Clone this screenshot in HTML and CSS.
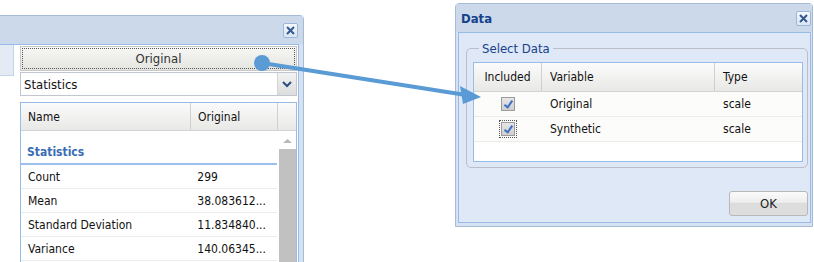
FILE: index.html
```html
<!DOCTYPE html>
<html lang="en">
<head>
    <meta charset="UTF-8">
    <title>Statistics and Data</title>
    <link rel="stylesheet" href="styles.css">
</head>
<body>
    <div class="canvas">

        <!-- Statistics window (cut off on the left) -->
        <div class="win win-stats">
            <div class="win-head">
                <span class="win-title"></span>
                <span class="win-close">
                    <svg viewBox="0 0 15 15" width="15" height="15"><path d="M4,4 L11,11 M11,4 L4,11" stroke="#34598f" stroke-width="2" fill="none"/></svg>
                </span>
            </div>
            <div class="win-body stats-body">
                <div class="side-box"></div>
                <div class="main-col">
                    <div class="btn-toggle"><span>Original</span></div>
                    <div class="combo">
                        <span class="combo-text">Statistics</span>
                        <span class="combo-trigger">
                            <svg viewBox="0 0 18 22" width="18" height="22"><path d="M5,9 L9,13 L13,9" stroke="#2c4d82" stroke-width="2" fill="none"/></svg>
                        </span>
                    </div>
                    <div class="grid stats-grid">
                        <div class="grid-head">
                            <div class="hcell col-name">Name</div>
                            <div class="hcell col-val">Original</div>
                            <div class="hcell col-sb"></div>
                        </div>
                        <div class="grid-main">
                            <div class="grid-rows">
                                <div class="group-row">Statistics</div>
                                <div class="row"><span class="col-name">Count</span><span class="col-val">299</span></div>
                                <div class="row"><span class="col-name">Mean</span><span class="col-val">38.083612...</span></div>
                                <div class="row"><span class="col-name">Standard Deviation</span><span class="col-val">11.834840...</span></div>
                                <div class="row"><span class="col-name">Variance</span><span class="col-val">140.06345...</span></div>
                            </div>
                            <div class="scrollbar">
                                <div class="sb-up">
                                    <svg viewBox="0 0 17 18" width="17" height="18"><polygon points="4,12 13,12 8.5,8" fill="#b9b9b9"/></svg>
                                </div>
                                <div class="sb-thumb"></div>
                            </div>
                        </div>
                    </div>
                </div>
            </div>
        </div>

        <!-- Data dialog -->
        <div class="win win-data">
            <div class="win-head">
                <span class="win-title">Data</span>
                <span class="win-close">
                    <svg viewBox="0 0 15 15" width="15" height="15"><path d="M4,4 L11,11 M11,4 L4,11" stroke="#34598f" stroke-width="2" fill="none"/></svg>
                </span>
            </div>
            <div class="win-body data-body">
                <fieldset class="select-set">
                    <legend>Select Data</legend>
                    <div class="grid data-grid">
                        <div class="grid-head">
                            <div class="hcell col-inc">Included</div>
                            <div class="hcell col-var">Variable</div>
                            <div class="hcell col-type">Type</div>
                        </div>
                        <div class="row">
                            <span class="col-inc"><span class="check"></span></span>
                            <span class="col-var">Original</span>
                            <span class="col-type">scale</span>
                        </div>
                        <div class="row">
                            <span class="col-inc"><span class="check focused"></span></span>
                            <span class="col-var">Synthetic</span>
                            <span class="col-type">scale</span>
                        </div>
                    </div>
                </fieldset>
                <div class="btn-row">
                    <div class="btn-ok">OK</div>
                </div>
            </div>
        </div>

        <!-- Connector arrow -->
        <svg class="connector" viewBox="0 0 814 262" width="814" height="262">
            <line x1="262" y1="63" x2="466" y2="95" stroke="#5b9bd5" stroke-width="4"/>
            <circle cx="262" cy="63" r="8" fill="#5b9bd5"/>
            <polygon points="481,97 460,86 463,104" fill="#5b9bd5"/>
        </svg>
    </div>
</body>
</html>
```

FILE: styles.css
```css
/* Page */
body {
    margin: 0;
    background: #ffffff;
    font-family: 'DejaVu Sans Condensed', 'DejaVu Sans', sans-serif;
    font-size: 12px;
    color: #111111;
}

.canvas {
    position: relative;
    width: 814px;
    height: 262px;
    overflow: hidden;
}

/* Windows */
.win {
    position: absolute;
    box-sizing: border-box;
    border: 1px solid #a6bcd6;
    border-radius: 4px 4px 0 0;
    background: #d6e2f0;
    display: flex;
    flex-direction: column;
}

.win-stats {
    left: -20px;
    top: 15px;
    width: 324px;
    height: 270px;
}

.win-data {
    left: 455px;
    top: 3px;
    width: 358px;
    height: 224px;
}

.win-head {
    height: 28px;
    flex: none;
    display: flex;
    align-items: center;
    justify-content: space-between;
    padding: 0 1px 0 5px;
    background: #cbd9ea;
}

.win-stats .win-head {
    padding-right: 5px;
}

.win-title {
    font-weight: bold;
    color: #15428b;
    font-size: 13px;
}

.win-close {
    width: 15px;
    height: 15px;
    box-sizing: border-box;
    border: 1px solid #9bb7dc;
    border-radius: 2px;
    background: linear-gradient(#f4f8fd, #dbe6f4);
    display: flex;
    margin-top: 1px;
}

.win-close svg {
    margin: -1px;
}

.win-body {
    flex: 1;
    border: 1px solid #99bbe8;
}

/* Statistics window body */
.stats-body {
    margin: 0 4px 0 3px;
    background: #ffffff;
    display: flex;
    align-items: flex-start;
    padding-top: 1px;
}

.side-box {
    width: 28px;
    height: 30px;
    flex: none;
    background: #e3ebf5;
    border-right: 1px solid #c2d4ec;
    border-bottom: 1px solid #c2d4ec;
    margin-top: -1px;
}

.main-col {
    margin-left: 6px;
    width: 277px;
    display: flex;
    flex-direction: column;
}

.btn-toggle {
    height: 25px;
    box-sizing: border-box;
    padding: 1px;
    border: 1px solid #c8c8c8;
    background: linear-gradient(#f7f7f5, #e4e4e0);
}

.btn-toggle span {
    display: flex;
    align-items: center;
    justify-content: center;
    height: 100%;
    box-sizing: border-box;
    border: 1px dotted #555555;
    color: #333333;
    font-size: 13px;
}

.combo {
    margin-top: 1px;
    height: 24px;
    box-sizing: border-box;
    border: 1px solid #c0c6d2;
    background: #ffffff;
    display: flex;
    align-items: center;
}

.combo-text {
    flex: 1;
    padding-left: 3px;
    font-size: 13px;
}

.combo-trigger {
    width: 18px;
    height: 22px;
    background: linear-gradient(#f3f3f3, #dcdcdc);
    border-left: 1px solid #d4d4d4;
}

/* Grids */
.grid {
    border: 1px solid #99bbe8;
    background: #ffffff;
}

.grid-head {
    display: flex;
    box-sizing: border-box;
    background: linear-gradient(#fbfbfb, #e8e8e6);
    border-bottom: 1px solid #d3d3d3;
}

.hcell {
    box-sizing: border-box;
    display: flex;
    align-items: center;
    border-right: 1px solid #d0d0d0;
}

.row {
    display: flex;
    align-items: center;
    box-sizing: border-box;
    border-bottom: 1px solid #ececec;
}

.stats-grid {
    margin-top: 6px;
    height: 200px;
}

.stats-grid .grid-head {
    height: 28px;
}

.stats-grid .col-name {
    width: 170px;
    padding-left: 7px;
    box-sizing: border-box;
}

.stats-grid .col-val {
    width: 87px;
    padding-left: 7px;
    box-sizing: border-box;
}

.stats-grid .col-sb {
    flex: 1;
    border-right: none;
}

.grid-main {
    display: flex;
}

.grid-rows {
    width: 256px;
}

.group-row {
    height: 34px;
    box-sizing: border-box;
    padding: 14px 0 0 6px;
    font-weight: bold;
    color: #3a6db3;
    border-bottom: 2px solid #9dbfeb;
}

.stats-grid .row {
    height: 24px;
}

.scrollbar {
    width: 17px;
    margin-left: 2px;
}

.sb-up {
    height: 18px;
}

.sb-thumb {
    height: 120px;
    background: #c1c1c1;
}

/* Data dialog body */
.data-body {
    margin: 0 1px 3px 2px;
    background: #dfe8f6;
    display: flex;
    flex-direction: column;
}

.select-set {
    margin: 8px 2px 0 7px;
    padding: 6px 4px 5px 6px;
    border: 1px solid #b9bec8;
    border-radius: 5px;
}

.select-set legend {
    padding: 0 3px;
    margin-left: 6px;
    color: #15428b;
    font-size: 13px;
}

.data-grid {
    height: 98px;
}

.data-grid .grid-head {
    height: 29px;
}

.data-grid .col-inc {
    width: 68px;
    box-sizing: border-box;
    display: flex;
    justify-content: center;
}

.data-grid .col-var {
    width: 173px;
    padding-left: 8px;
    box-sizing: border-box;
}

.data-grid .col-type {
    flex: 1;
    padding-left: 8px;
    border-right: none;
}

.data-grid .row {
    height: 25px;
    background: #fcfcfa;
}

.check {
    width: 14px;
    height: 14px;
    box-sizing: border-box;
    border: 1px solid #9c9c9c;
    background: linear-gradient(#e6e6e6, #cfcfcf);
    position: relative;
}

.check::after {
    content: "";
    position: absolute;
    left: 4px;
    top: 1px;
    width: 3px;
    height: 7px;
    border: solid #3d6fc4;
    border-width: 0 2px 2px 0;
    transform: rotate(35deg);
}

.check.focused {
    outline: 1px dotted #555555;
    outline-offset: 1px;
}

.btn-row {
    display: flex;
    justify-content: flex-end;
    margin: 23px 2px 0 0;
}

.btn-ok {
    width: 79px;
    height: 25px;
    box-sizing: border-box;
    border: 1px solid #b8b8b8;
    border-radius: 3px;
    background: linear-gradient(#fbfbfb 0%, #ededed 45%, #dcdcdc 50%, #dedede 100%);
    display: flex;
    align-items: center;
    justify-content: center;
    font-size: 13px;
    color: #222222;
}

/* Connector arrow over both windows */
.connector {
    position: absolute;
    left: 0;
    top: 0;
    pointer-events: none;
}
```
